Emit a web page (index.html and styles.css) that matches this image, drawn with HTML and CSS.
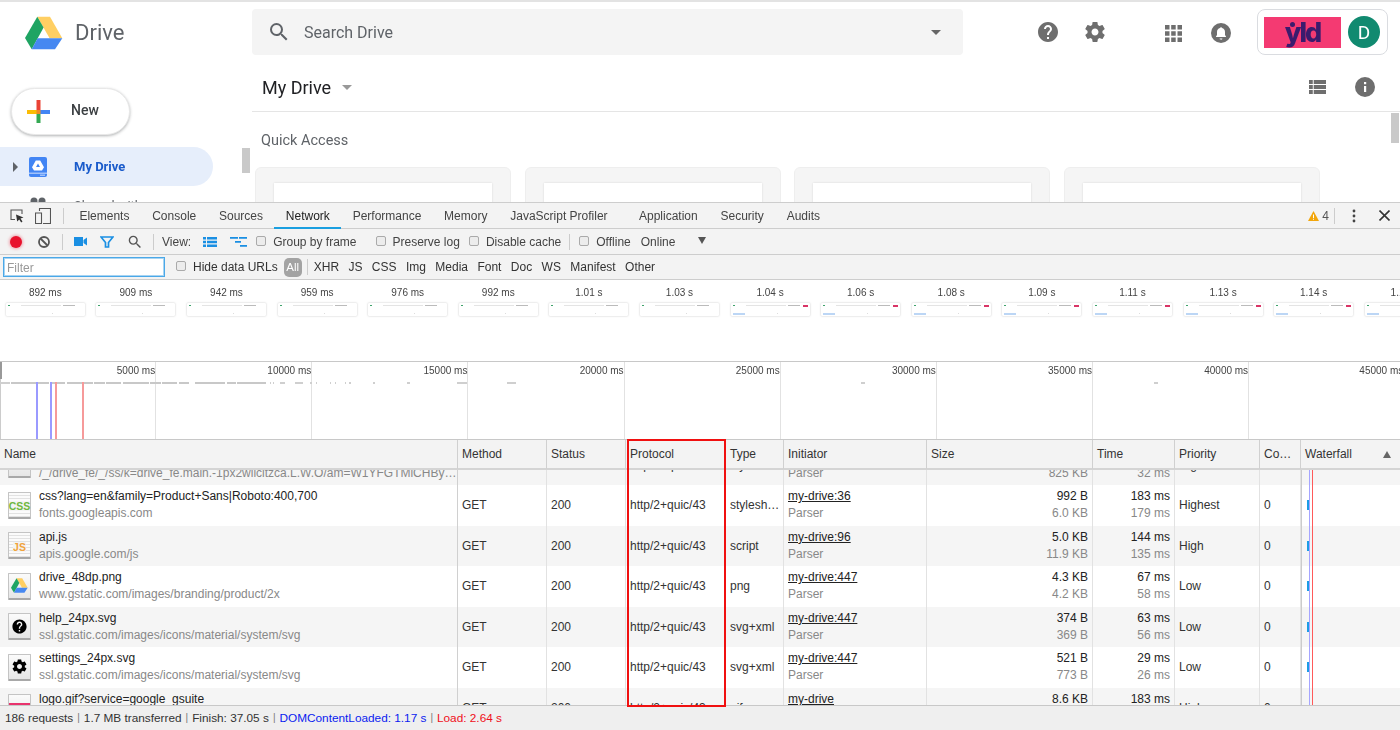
FILE: index.html
```html
<!DOCTYPE html>
<html lang="en">
<head>
<meta charset="utf-8">
<title>Drive network panel</title>
<link rel="stylesheet" href="styles.css">
</head>
<body>
<div class="page">
  <section class="drive">
    <header class="topbar">
      <div class="brand">
        <svg class="drive-logo" viewBox="0 0 38 34"><path fill="#ffcf63" d="M12.3.7H25l12.3 21.6H24.6z"/><path fill="#1fa463" d="M0 22 12.3.7l6.3 10.8L6.7 33.3z"/><path fill="#4688f1" d="M6.7 33.3H30l7.3-11H12.6z"/></svg>
        <span class="brand-name">Drive</span>
      </div>
      <div class="search">
        <svg class="search-icon" viewBox="0 0 24 24"><path fill="#5f6368" d="M15.5 14h-.79l-.28-.27A6.47 6.47 0 0 0 16 9.5 6.5 6.5 0 1 0 9.5 16c1.61 0 3.09-.59 4.23-1.57l.27.28v.79l5 4.99L20.49 19l-4.99-5zm-6 0C7.01 14 5 11.99 5 9.5S7.01 5 9.5 5 14 7.01 14 9.5 11.99 14 9.5 14z"/></svg>
        <span class="search-text">Search Drive</span>
        <span class="caret dark search-caret"></span>
      </div>
      <svg class="top-icon help" viewBox="0 0 24 24"><path d="M12 2C6.48 2 2 6.48 2 12s4.48 10 10 10 10-4.48 10-10S17.52 2 12 2zm1 17h-2v-2h2v2zm2.07-7.75l-.9.92C13.45 12.9 13 13.5 13 15h-2v-.5c0-1.1.45-2.1 1.17-2.83l1.24-1.26c.37-.36.59-.86.59-1.41 0-1.1-.9-2-2-2s-2 .9-2 2H8c0-2.21 1.79-4 4-4s4 1.79 4 4c0 .88-.36 1.68-.93 2.25z"/></svg>
      <svg class="top-icon gear" viewBox="0 0 24 24"><path d="M19.43 12.98c.04-.32.07-.64.07-.98s-.03-.66-.07-.98l2.11-1.65c.19-.15.24-.42.12-.64l-2-3.46c-.12-.22-.39-.3-.61-.22l-2.49 1c-.52-.4-1.08-.73-1.69-.98l-.38-2.65C14.46 2.18 14.25 2 14 2h-4c-.25 0-.46.18-.49.42l-.38 2.65c-.61.25-1.17.59-1.69.98l-2.49-1c-.23-.09-.49 0-.61.22l-2 3.46c-.13.22-.07.49.12.64l2.11 1.65c-.04.32-.07.65-.07.98s.03.66.07.98l-2.11 1.65c-.19.15-.24.42-.12.64l2 3.46c.12.22.39.3.61.22l2.49-1c.52.4 1.08.73 1.69.98l.38 2.65c.03.24.24.42.49.42h4c.25 0 .46-.18.49-.42l.38-2.65c.61-.25 1.17-.59 1.69-.98l2.49 1c.23.09.49 0 .61-.22l2-3.46c.12-.22.07-.49-.12-.64l-2.11-1.65zM12 15.5c-1.93 0-3.5-1.57-3.5-3.5s1.57-3.5 3.5-3.5 3.5 1.57 3.5 3.5-1.57 3.5-3.5 3.5z"/></svg>
      <svg class="top-icon apps" viewBox="0 0 17 17"><path d="M0 0h4.5v4.5H0zM6.2 0h4.5v4.5H6.200zM12.500 0H17v4.500h-4.500zM0 6.200h4.500v4.500H0zM6.200 6.200h4.500v4.500H6.200zM12.500 6.200H17v4.500h-4.500zM0 12.500h4.500V17H0zM6.200 12.500h4.500V17H6.200zM12.500 12.500H17V17h-4.500z"/></svg>
      <svg class="top-icon bell" viewBox="0 0 20 20"><circle cx="10" cy="10" r="10"/><path fill="#fff" d="M10 4.200c-.6 0-1 .4-1 .9-1.900.5-3 2-3 4v3l-1 1.400v.5h10v-.5l-1-1.400v-3c0-2-1.100-3.500-3-4 0-.5-.4-.9-1-.9zM8.600 15.500c0 .8.6 1.200 1.400 1.200s1.400-.4 1.400-1.200z"/></svg>
      <div class="account">
        <div class="org"><span class="org-name">yld</span></div>
        <div class="avatar">D</div>
      </div>
    </header>
    <div class="drive-body">
      <aside class="side">
        <button class="new-btn">
          <svg class="plus" viewBox="0 0 23 23"><path fill="#fbbc05" d="M0 10h10v4H0z"/><path fill="#4285f4" d="M13 10h10v4H13z"/><path fill="#ea4335" d="M9.500 0h4v10h-4z"/><path fill="#34a853" d="M9.500 14h4v9h-4z"/><path fill="#f08a24" d="M9.500 10h4v4h-4z"/></svg>
          <span class="new-label">New</span>
        </button>
        <div class="nav-item active">
          <span class="nav-arrow"></span>
          <svg class="nav-icon" viewBox="0 0 18 20"><rect width="18" height="20" rx="2" fill="#4285f4"/><path fill="#fff" d="M6.800 3.500h4.400l3.800 6.800-2 3.200H5l-2-3.200zM9 6.500 7 10h4z"/><path fill="#fff" d="M0 15.800h18v.8H0zM11 17.700h5v.8h-5z"/></svg>
          <span>My Drive</span>
        </div>
        <div class="nav-item">
          <span class="nav-arrow blank"></span>
          <svg class="nav-icon" viewBox="0 0 18 20"><circle cx="5" cy="5" r="3.500" fill="#5f6368"/><circle cx="13" cy="5" r="3.500" fill="#5f6368"/></svg>
          <span class="nav-muted">Shared with me</span>
        </div>
      </aside>
      <div class="thumb side-thumb"></div>
      <main class="main">
        <div class="crumb">
          <span class="crumb-title">My Drive</span>
          <span class="caret crumb-caret"></span>
          <svg class="list-icon" viewBox="0 0 18 14" preserveAspectRatio="none"><path fill="#6e6e6e" d="M0 0h4v4H0zM5 0h13v4H5zM0 5h4v4H0zM5 5h13v4H5zM0 10h4v4H0zM5 10h13v4H5z"/></svg>
          <svg class="info-icon" viewBox="0 0 20 20"><circle cx="10" cy="10" r="10" fill="#6e6e6e"/><path fill="#fff" d="M9 9h2.200v6H9zM9 5h2.200v2.200H9z"/></svg>
        </div>
        <h2 class="quick">Quick Access</h2>
        <div class="cards">
          <div class="card"><div class="card-inner"></div></div>
          <div class="card"><div class="card-inner"></div></div>
          <div class="card"><div class="card-inner"></div></div>
          <div class="card"><div class="card-inner"></div></div>
        </div>
      </main>
      <div class="thumb main-thumb"></div>
    </div>
  </section>

  <section class="devtools">
    <div class="tabs">
      <svg class="dt-icon inspect" viewBox="0 0 14 14"><path fill="none" stroke="#555" stroke-width="1.100" d="M5 10.500H1V1h11v4"/><path fill="#333" d="m6 5.500 7.500 3-3 1 2 3-1.300 1-2-3-2 2z"/></svg>
      <svg class="dt-icon device" viewBox="0 0 16 16"><path fill="none" stroke="#555" stroke-width="1.100" d="M6.500 15.500h-6V5h6v10.500zM4.500 3V.5h11v15H8"/></svg>
      <span class="vsep tab-sep"></span>
      <span class="tab">Elements</span>
      <span class="tab">Console</span>
      <span class="tab">Sources</span>
      <span class="tab on">Network</span>
      <span class="tab">Performance</span>
      <span class="tab">Memory</span>
      <span class="tab wide">JavaScript Profiler</span>
      <span class="tab">Application</span>
      <span class="tab">Security</span>
      <span class="tab">Audits</span>
      <span class="tab-end">
        <svg class="warn" viewBox="0 0 11 10"><path fill="#f2a60c" d="M5.500 0 11 10H0z"/><path fill="#fff" d="M5 3.500h1V7H5zM5 7.800h1v1H5z"/></svg>
        <span class="warn-count">4</span>
        <span class="vsep warn-sep"></span>
        <svg class="kebab" viewBox="0 0 4 14"><circle cx="2" cy="2" r="1.400"/><circle cx="2" cy="7" r="1.400"/><circle cx="2" cy="12" r="1.400"/></svg>
        <svg class="close" viewBox="0 0 11 11"><path stroke="#333" stroke-width="1.600" d="m.5.500 10 10M10.500.5l-10 10"/></svg>
      </span>
    </div>

    <div class="toolbar">
      <span class="record"></span>
      <svg class="tool clear g16" viewBox="0 0 12 12"><circle cx="6" cy="6" r="5" fill="none" stroke="#555" stroke-width="1.800"/><path stroke="#555" stroke-width="1.800" d="m2.500 2.500 7 7"/></svg>
      <span class="vsep g12"></span>
      <svg class="tool cam g11" viewBox="0 0 13 9"><path fill="#1a8fe3" d="M0 0h9v9H0zM9.500 3 13 .5v8L9.500 6z"/></svg>
      <svg class="tool funnel g13" viewBox="0 0 14 12"><path fill="none" stroke="#1a8fe3" stroke-width="1.700" d="M1 1h12L8.500 6.500V11h-3V6.500z"/></svg>
      <svg class="tool lens g14" viewBox="0 0 20 20"><path fill="#555" d="M13.500 12h-.79l-.28-.27A6.470 6.470 0 0 0 14 7.500 6.500 6.500 0 1 0 7.500 14c1.610 0 3.090-.59 4.230-1.570l.27.28v.79l5 4.990L18.490 17l-4.990-5zm-6 0C5.010 12 3 9.990 3 7.500S5.010 3 7.500 3 12 5.010 12 7.500 9.990 12 7.500 12z"/></svg>
      <span class="vsep g11"></span>
      <span class="g8">View:</span>
      <svg class="tool view-a g12" viewBox="0 0 14 10"><path fill="#1a8fe3" d="M0 0h3v2.500H0zM4 0h10v2.500H4zM0 3.700h3v2.500H0zM4 3.700h10v2.500H4zM0 7.500h3V10H0zM4 7.500h10V10H4z"/></svg>
      <svg class="tool view-b g13" viewBox="0 0 17 10"><path fill="#1a8fe3" d="M0 0h8v1.800H0zM17 0v1.800H9V0zM5 4h6v1.800H5zM10 8h7v1.800h-7z"/></svg>
      <label class="check g9"><span class="box"></span>Group by frame</label>
      <label class="check g19"><span class="box"></span>Preserve log</label>
      <label class="check g9"><span class="box"></span>Disable cache</label>
      <span class="vsep g8"></span>
      <label class="check g9"><span class="box"></span>Offline</label>
      <span class="g10">Online</span>
      <span class="tri g23"></span>
    </div>

    <div class="filters">
      <span class="filter-input">Filter</span>
      <label class="check g11"><span class="box"></span>Hide data URLs</label>
      <span class="pill">All</span>
      <span class="vsep g5"></span>
      <span class="type first">XHR</span>
      <span class="type">JS</span>
      <span class="type">CSS</span>
      <span class="type">Img</span>
      <span class="type">Media</span>
      <span class="type">Font</span>
      <span class="type">Doc</span>
      <span class="type">WS</span>
      <span class="type">Manifest</span>
      <span class="type">Other</span>
    </div>

    <div class="film">
      <div class="shot"><span>892 ms</span><i class="frame"></i></div>
      <div class="shot"><span>909 ms</span><i class="frame"></i></div>
      <div class="shot"><span>942 ms</span><i class="frame"></i></div>
      <div class="shot"><span>959 ms</span><i class="frame"></i></div>
      <div class="shot"><span>976 ms</span><i class="frame"></i></div>
      <div class="shot"><span>992 ms</span><i class="frame"></i></div>
      <div class="shot"><span>1.01 s</span><i class="frame"></i></div>
      <div class="shot"><span>1.03 s</span><i class="frame"></i></div>
      <div class="shot"><span>1.04 s</span><i class="frame late"></i></div>
      <div class="shot"><span>1.06 s</span><i class="frame late"></i></div>
      <div class="shot"><span>1.08 s</span><i class="frame late"></i></div>
      <div class="shot"><span>1.09 s</span><i class="frame late"></i></div>
      <div class="shot"><span>1.11 s</span><i class="frame late"></i></div>
      <div class="shot"><span>1.13 s</span><i class="frame late"></i></div>
      <div class="shot"><span>1.14 s</span><i class="frame late"></i></div>
      <div class="shot"><span>1.16 s</span><i class="frame late"></i></div>
    </div>

    <div class="overview">
      <div class="ov-cell">5000 ms</div>
      <div class="ov-cell">10000 ms</div>
      <div class="ov-cell">15000 ms</div>
      <div class="ov-cell">20000 ms</div>
      <div class="ov-cell">25000 ms</div>
      <div class="ov-cell">30000 ms</div>
      <div class="ov-cell">35000 ms</div>
      <div class="ov-cell">40000 ms</div>
      <div class="ov-cell">45000 ms</div>
      <svg class="ov-bars" viewBox="0 0 1400 3"><path stroke="#cfcfcf" stroke-width="2" d="M0 1h10"/><path stroke="#c8c8c8" stroke-width="2" stroke-dasharray="26 1 11 1 15 2" d="M11 1h178"/><path stroke="#c8c8c8" stroke-width="2" stroke-dasharray="30 2 9 1" d="M195 1h71"/><path stroke="#cfcfcf" stroke-width="2" d="M270 1h1M273 1h1M280 1h5M295 1h8M310 1h2M316 1h1M330 1h1M335 1h1M345 1h1M349 1h2M373 1h2M407 1h3M457 1h10M507 1h9M861 1h4M1154 1h4"/></svg>
      <i class="ov-line blue first"></i>
      <i class="ov-line blue second"></i>
      <i class="ov-line red first"></i>
      <i class="ov-line red second"></i>
    </div>

    <div class="tbl-head">
      <div class="th">Name</div>
      <div class="th">Method</div>
      <div class="th">Status</div>
      <div class="th">Protocol</div>
      <div class="th">Type</div>
      <div class="th">Initiator</div>
      <div class="th">Size</div>
      <div class="th">Time</div>
      <div class="th">Priority</div>
      <div class="th">Co…</div>
      <div class="th last">Waterfall<span class="sort"></span></div>
    </div>

    <div class="tbl-body">
      <div class="rows">
        <div class="row odd">
          <div class="td name"><span class="ficon"></span><div class="two"><b>main.css</b><em>/_/drive_fe/_/ss/k=drive_fe.main.-1px2wiicitzca.L.W.O/am=W1YFGTMiCHBy…</em></div></div>
          <div class="td">GET</div><div class="td">200</div><div class="td">http/2+quic/43</div><div class="td">stylesh…</div>
          <div class="td"><div class="two"><b><u>my-drive:24</u></b><em>Parser</em></div></div>
          <div class="td num"><div class="two"><b>93 KB</b><em>825 KB</em></div></div>
          <div class="td num"><div class="two"><b>36 ms</b><em>32 ms</em></div></div>
          <div class="td">Highest</div><div class="td">0</div><div class="td fall"><i class="bar"></i></div>
        </div>
        <div class="row">
          <div class="td name"><span class="ficon doc"><span class="ftext css">CSS</span></span><div class="two"><b>css?lang=en&amp;family=Product+Sans|Roboto:400,700</b><em>fonts.googleapis.com</em></div></div>
          <div class="td">GET</div><div class="td">200</div><div class="td">http/2+quic/43</div><div class="td">stylesh…</div>
          <div class="td"><div class="two"><b><u>my-drive:36</u></b><em>Parser</em></div></div>
          <div class="td num"><div class="two"><b>992 B</b><em>6.0 KB</em></div></div>
          <div class="td num"><div class="two"><b>183 ms</b><em>179 ms</em></div></div>
          <div class="td">Highest</div><div class="td">0</div><div class="td fall"><i class="bar"></i></div>
        </div>
        <div class="row odd">
          <div class="td name"><span class="ficon doc"><span class="ftext js">JS</span></span><div class="two"><b>api.js</b><em>apis.google.com/js</em></div></div>
          <div class="td">GET</div><div class="td">200</div><div class="td">http/2+quic/43</div><div class="td">script</div>
          <div class="td"><div class="two"><b><u>my-drive:96</u></b><em>Parser</em></div></div>
          <div class="td num"><div class="two"><b>5.0 KB</b><em>11.9 KB</em></div></div>
          <div class="td num"><div class="two"><b>144 ms</b><em>135 ms</em></div></div>
          <div class="td">High</div><div class="td">0</div><div class="td fall"><i class="bar"></i></div>
        </div>
        <div class="row">
          <div class="td name"><span class="ficon"><svg class="fsvg" viewBox="0 0 38 34"><path fill="#ffcf63" d="M12.300.7H25l12.300 21.600H24.600z"/><path fill="#1fa463" d="M0 22 12.300.7l6.300 10.800L6.700 33.300z"/><path fill="#4688f1" d="M6.700 33.300H30l7.300-11H12.600z"/></svg></span><div class="two"><b>drive_48dp.png</b><em>www.gstatic.com/images/branding/product/2x</em></div></div>
          <div class="td">GET</div><div class="td">200</div><div class="td">http/2+quic/43</div><div class="td">png</div>
          <div class="td"><div class="two"><b><u>my-drive:447</u></b><em>Parser</em></div></div>
          <div class="td num"><div class="two"><b>4.3 KB</b><em>4.2 KB</em></div></div>
          <div class="td num"><div class="two"><b>67 ms</b><em>58 ms</em></div></div>
          <div class="td">Low</div><div class="td">0</div><div class="td fall"><i class="bar"></i></div>
        </div>
        <div class="row odd">
          <div class="td name"><span class="ficon"><svg class="fsvg" viewBox="0 0 24 24"><path d="M12 2C6.480 2 2 6.480 2 12s4.480 10 10 10 10-4.480 10-10S17.520 2 12 2zm1 17h-2v-2h2v2zm2.070-7.750l-.9.920C13.450 12.900 13 13.500 13 15h-2v-.5c0-1.100.45-2.100 1.170-2.830l1.240-1.260c.37-.36.59-.86.59-1.410 0-1.100-.9-2-2-2s-2 .9-2 2H8c0-2.210 1.790-4 4-4s4 1.790 4 4c0 .88-.36 1.680-.93 2.250z"/></svg></span><div class="two"><b>help_24px.svg</b><em>ssl.gstatic.com/images/icons/material/system/svg</em></div></div>
          <div class="td">GET</div><div class="td">200</div><div class="td">http/2+quic/43</div><div class="td">svg+xml</div>
          <div class="td"><div class="two"><b><u>my-drive:447</u></b><em>Parser</em></div></div>
          <div class="td num"><div class="two"><b>374 B</b><em>369 B</em></div></div>
          <div class="td num"><div class="two"><b>63 ms</b><em>56 ms</em></div></div>
          <div class="td">Low</div><div class="td">0</div><div class="td fall"><i class="bar"></i></div>
        </div>
        <div class="row">
          <div class="td name"><span class="ficon"><svg class="fsvg" viewBox="0 0 24 24"><path d="M19.430 12.980c.04-.32.07-.64.07-.98s-.03-.66-.07-.98l2.110-1.650c.19-.15.24-.42.12-.64l-2-3.460c-.12-.22-.39-.3-.61-.22l-2.490 1c-.52-.4-1.080-.73-1.690-.98l-.38-2.650C14.460 2.180 14.250 2 14 2h-4c-.25 0-.46.18-.49.42l-.38 2.650c-.61.25-1.170.59-1.690.98l-2.490-1c-.23-.09-.49 0-.61.22l-2 3.460c-.13.22-.07.49.12.64l2.110 1.650c-.04.32-.07.65-.07.98s.03.66.07.98l-2.110 1.650c-.19.15-.24.42-.12.64l2 3.460c.12.22.39.3.61.22l2.490-1c.52.4 1.080.73 1.690.98l.38 2.650c.03.24.24.42.49.42h4c.25 0 .46-.18.49-.42l.38-2.650c.61-.25 1.170-.59 1.690-.98l2.490 1c.23.09.49 0 .61-.22l2-3.460c.12-.22.07-.49-.12-.64l-2.110-1.650zM12 15.500c-1.930 0-3.500-1.570-3.500-3.500s1.570-3.500 3.500-3.500 3.500 1.570 3.500 3.500-1.570 3.500-3.500 3.500z"/></svg></span><div class="two"><b>settings_24px.svg</b><em>ssl.gstatic.com/images/icons/material/system/svg</em></div></div>
          <div class="td">GET</div><div class="td">200</div><div class="td">http/2+quic/43</div><div class="td">svg+xml</div>
          <div class="td"><div class="two"><b><u>my-drive:447</u></b><em>Parser</em></div></div>
          <div class="td num"><div class="two"><b>521 B</b><em>773 B</em></div></div>
          <div class="td num"><div class="two"><b>29 ms</b><em>26 ms</em></div></div>
          <div class="td">Low</div><div class="td">0</div><div class="td fall"><i class="bar"></i></div>
        </div>
        <div class="row odd">
          <div class="td name"><span class="ficon"><span class="fstripe"></span></span><div class="two"><b>logo.gif?service=google_gsuite</b><em>www.google.com</em></div></div>
          <div class="td">GET</div><div class="td">200</div><div class="td">http/2+quic/43</div><div class="td">gif</div>
          <div class="td"><div class="two"><b><u>my-drive</u></b><em>Parser</em></div></div>
          <div class="td num"><div class="two"><b>8.6 KB</b><em>8.2 KB</em></div></div>
          <div class="td num"><div class="two"><b>183 ms</b><em>179 ms</em></div></div>
          <div class="td">High</div><div class="td">0</div><div class="td fall"><i class="dot"></i></div>
        </div>
      </div>
      <i class="wf-line blue"></i>
      <i class="wf-line red"></i>
    </div>

    <footer class="status">
      <span>186 requests</span><span class="pipe">|</span><span>1.7 MB transferred</span><span class="pipe">|</span><span>Finish: 37.05 s</span><span class="pipe">|</span><span class="dcl">DOMContentLoaded: 1.17 s</span><span class="pipe">|</span><span class="load">Load: 2.64 s</span>
    </footer>
    <div class="highlight"></div>
  </section>
</div>
</body>
</html>
```

FILE: styles.css
```css
* { box-sizing: border-box; }
html, body { margin: 0; height: 100%; background: #fff; }
body { overflow: hidden; }
.page {
  width: 1400px; height: 730px; overflow: hidden;
  display: flex; flex-direction: column;
  font-family: "Liberation Sans", Arial, sans-serif; font-size: 12px; color: #333;
  filter: blur(0.3px);
}

/* Drive */
.drive { height: 202px; flex: none; border-top: 2px solid #e3e3e3; overflow: hidden; font-family: Roboto, Arial, sans-serif; display: flex; flex-direction: column; }
.topbar { height: 63px; flex: none; padding-top: 7px; display: flex; align-items: flex-start; }
.brand { width: 252px; flex: none; padding: 7px 0 0 25px; display: flex; align-items: center; height: 41px; }
.drive-logo { width: 38px; height: 34px; }
.brand-name { margin: 0 0 2px 12px; font-size: 22px; color: #5f6368; }
.search { width: 711px; height: 46px; flex: none; background: #f4f4f4; border-radius: 4px; display: flex; align-items: center; padding-left: 15px; }
.search-icon { width: 24px; height: 24px; }
.search-text { margin-left: 13px; font-size: 16px; color: #5f6368; }
.caret { width: 0; height: 0; border: 5px solid transparent; border-top-color: #999; border-bottom: 0; }
.caret.dark { border-top-color: #666; }
.search-caret { margin-left: auto; margin-right: 22px; }
.top-icon { fill: #6e6e6e; flex: none; }
.help { width: 24px; height: 24px; margin: 11px 0 0 73px; }
.gear { width: 24px; height: 24px; margin: 11px 0 0 23px; }
.apps { width: 17px; height: 17px; margin: 16px 0 0 58px; }
.bell { width: 20px; height: 20px; margin: 14px 0 0 29px; }
.account { width: 131px; height: 46px; margin-left: 26px; flex: none; border: 1px solid #dadce0; border-radius: 8px; display: flex; align-items: center; padding-left: 6px; }
.org { width: 77px; height: 31px; background: #f43a72; display: flex; align-items: center; justify-content: center; position: relative; }
.org::before { content: ""; position: absolute; left: 26px; top: 5px; width: 5px; height: 5px; border-radius: 50%; background: #3b1b6d; }
.org-name { font-family: Inter, "Liberation Sans", sans-serif; font-size: 27px; line-height: 31px; font-weight: 800; letter-spacing: -2px; color: #3b1b6d; }
.avatar { width: 32px; height: 32px; margin-left: 7px; border-radius: 50%; background: #118a70; color: #fff; font-size: 19px; display: flex; align-items: center; justify-content: center; }

.drive-body { flex: 1; display: flex; position: relative; min-height: 0; }
.side { width: 252px; flex: none; padding-top: 23px; }
.new-btn { width: 119px; height: 47px; margin-left: 11px; border: 1px solid #e8e8e8; border-radius: 24px; background: #fff; box-shadow: 0 1px 3px rgba(60,64,67,.4); display: flex; align-items: center; padding: 0 0 0 15px; font: 500 14px Roboto, Arial, sans-serif; color: #3c4043; }
.plus { width: 23px; height: 23px; margin-right: 21px; }
.new-label { margin-bottom: 3px; }
.nav-item { width: 213px; height: 39px; display: flex; align-items: center; padding-left: 13px; border-radius: 0 20px 20px 0; font-size: 13px; }
.nav-item.active { margin-top: 12px; background: #e6eefb; color: #1a5bcb; font-weight: 700; }
.nav-arrow { width: 0; height: 0; border: 5px solid transparent; border-left: 5px solid #5f6368; border-right: 0; }
.nav-arrow.blank { border-left-color: transparent; }
.nav-icon { width: 18px; height: 20px; margin: 0 27px 0 11px; }
.nav-muted { color: #5f6368; }
.thumb { position: absolute; width: 8px; background: #c9c9c9; }
.side-thumb { left: 242px; top: 83px; height: 25px; }
.main-thumb { left: 1391px; top: 48px; height: 30px; }
.main { flex: 1; min-width: 0; }
.crumb { height: 47px; border-bottom: 1px solid #e5e5e5; display: flex; align-items: center; padding: 0 25px 2px 10px; }
.crumb-title { font-size: 18px; color: #202124; }
.crumb-caret { margin-left: 11px; }
.list-icon { width: 17px; height: 14px; margin-left: auto; }
.info-icon { width: 20px; height: 20px; margin-left: 29px; }
.quick { margin: 20px 0 0 9px; font-size: 14.500px; line-height: 17px; font-weight: 400; color: #5f6368; }
.cards { display: flex; gap: 13.700px; margin: 18px 0 0 3px; }
.card { width: 256px; height: 60px; flex: none; background: #f5f5f5; border-radius: 6px 6px 0 0; border: 1px solid #eee; padding: 15px 18px 0; }
.card-inner { height: 60px; background: #fff; box-shadow: 0 0 2px rgba(0,0,0,.12); }

/* DevTools */
.devtools { flex: 1; min-height: 0; display: flex; flex-direction: column; position: relative; background: #fff; }
.tabs, .toolbar, .filters { display: flex; align-items: center; flex: none; background: #f3f3f3; border-bottom: 1px solid #cdcdcd; }
.tabs { height: 27px; border-top: 1px solid #cdcdcd; padding-left: 10px; color: #444; }
.toolbar { height: 26px; padding-left: 10px; color: #444; }
.filters { height: 25px; padding-left: 3px; color: #333; }
.dt-icon { flex: none; }
.inspect { width: 14px; height: 14px; }
.device { width: 16px; height: 16px; margin-left: 11px; }
.vsep { width: 1px; height: 16px; background: #ccc; flex: none; }
.tab-sep { margin: 0 4px 0 12px; }
.tab { height: 100%; padding: 0 11.400px; display: flex; align-items: center; position: relative; }
.tab.wide { padding-right: 20px; }
.tab.on { color: #222; border-bottom: 2px solid #1a9fe0; margin-bottom: -1px; padding-top: 1px; }
.tab-end { margin-left: auto; display: flex; align-items: center; padding-right: 10px; }
.warn { width: 11px; height: 10px; }
.warn-count { margin-left: 3px; color: #555; }
.warn-sep { margin-left: 5px; }
.kebab { width: 4px; height: 14px; margin-left: 17px; fill: #444; }
.close { width: 11px; height: 11px; margin-left: 23px; }

.record { width: 12px; height: 12px; flex: none; border-radius: 50%; background: #e8122d; box-shadow: 0 0 3px 1px rgba(232,18,45,.35); }
.tool { flex: none; }
.clear { width: 12px; height: 12px; }
.cam { width: 13px; height: 9px; }
.funnel { width: 14px; height: 12px; }
.lens { width: 14px; height: 14px; }
.view-a { width: 14px; height: 10px; }
.view-b { width: 17px; height: 10px; }
.g5 { margin-left: 5px; } .g8 { margin-left: 8px; } .g9 { margin-left: 9px; }
.g10 { margin-left: 10px; } .g11 { margin-left: 11px; } .g12 { margin-left: 12px; }
.g13 { margin-left: 13px; } .g14 { margin-left: 14px; } .g16 { margin-left: 16px; }
.g19 { margin-left: 19px; } .g23 { margin-left: 23px; }
.check { display: flex; align-items: center; flex: none; }
.box { width: 10px; height: 10px; margin: -2px 7px 0 0; border: 1px solid #aaa; border-radius: 2px; background: #ececec; }
.tri { width: 0; height: 0; border: 4px solid transparent; border-top: 7px solid #555; border-bottom: 0; margin-top: -2px; }
.filter-input { width: 162px; height: 20px; border: 1px solid #4aa8e8; box-shadow: inset 0 0 0 1px #a8d4f2; background: #fff; color: #999; padding: 3px 0 0 3px; line-height: 14px; }
.pill { margin-left: 6px; width: 18px; height: 19px; border-radius: 5px; background: #a3a3a3; color: #fff; display: flex; align-items: center; justify-content: center; font-size: 11.500px; }
.type { margin-left: 9.400px; }
.type.first { margin-left: 6px; }

.film { height: 81px; flex: none; display: flex; overflow: hidden; }
.shot { width: 90.600px; flex: none; display: flex; flex-direction: column; align-items: center; padding-top: 7px; font-size: 10px; line-height: 12px; color: #444; }
.frame {
  width: 79px; height: 13px; margin-top: 4px; display: block; border-radius: 1px; box-shadow: 0 0 2px rgba(0,0,0,.25);
  background-color: #fff;
  background-image: linear-gradient(#3fa36c,#3fa36c), linear-gradient(#e4e4e4,#e4e4e4), linear-gradient(#bbb,#bbb), linear-gradient(#ddd,#ddd);
  background-repeat: no-repeat;
  background-size: 2px 1px, 40px 1px, 12px 1px, 1px 1px;
  background-position: 2px 2px, 15px 2px, 57px 2px, 46px 10px;
}
.frame.late {
  background-image: linear-gradient(#3fa36c,#3fa36c), linear-gradient(#e4e4e4,#e4e4e4), linear-gradient(#bbb,#bbb), linear-gradient(#d93566,#d93566), linear-gradient(#bcd6f5,#bcd6f5), linear-gradient(#ddd,#ddd);
  background-size: 2px 1px, 40px 1px, 12px 1px, 5px 2px, 12px 2px, 1px 1px;
  background-position: 2px 2px, 15px 2px, 57px 2px, 72px 2px, 2px 10px, 46px 10px;
}

.overview { height: 79px; flex: none; display: flex; position: relative; overflow: hidden; border-top: 1px solid #c8c8c8; border-bottom: 1px solid #c8c8c8; background: linear-gradient(#999,#999) 0 0 / 2px 17px no-repeat, linear-gradient(#ccc,#ccc) 0 0 / 1px 100% no-repeat; }
.ov-cell { width: 156.150px; flex: none; border-right: 1px solid #e2e2e2; text-align: right; padding: 3px 0 0 0; font-size: 10px; line-height: 12px; color: #444; white-space: nowrap; }
.ov-cell:last-of-type { border-right: 0; padding-right: 2px; }
.ov-bars { position: absolute; left: 0; top: 20px; width: 1400px; height: 3px; }
.ov-line { position: absolute; top: 20px; bottom: 0; width: 2px; }
.ov-line.blue { background: #9a9aff; }
.ov-line.red { background: #f69a9a; }
.ov-line.blue.first { left: 36px; }
.ov-line.blue.second { left: 50px; }
.ov-line.red.first { left: 55px; }
.ov-line.red.second { left: 82px; }

.tbl-head, .row { display: grid; grid-template-columns: 458px 89px 79px 100px 58px 143px 166px 82px 85px 41px 1fr; }
.tbl-head { height: 30px; flex: none; background: #f3f3f3; border-bottom: 2px solid #d4d4d4; position: relative; z-index: 1; }
.th { padding-left: 4px; line-height: 29px; border-right: 1px solid #d0d0d0; white-space: nowrap; position: relative; color: #333; }
.th.last { border-right: 0; }
.sort { position: absolute; right: 9px; top: 11px; width: 0; height: 0; border: 4px solid transparent; border-bottom: 7px solid #666; border-top: 0; }

.tbl-body { flex: 1; min-height: 0; overflow: hidden; position: relative; border-bottom: 1px solid #c8c8c8; }
.rows { margin-top: -25.500px; }
.row { height: 40.500px; background: #fff; }
.row.odd { background: #f5f5f5; }
.td { padding: 0 4px; border-right: 1px solid #e2e2e2; display: flex; align-items: center; min-width: 0; white-space: nowrap; overflow: hidden; color: #333; }
.td.num { justify-content: flex-end; text-align: right; padding-right: 4px; }
.td.name { padding-left: 8px; border-right-color: #d0d0d0; }
.td.fall { border-right: 0; padding-left: 5px; border-left: 1px solid #ccc; }
.two { display: flex; flex-direction: column; min-width: 0; }
.two b, .two em { font-weight: 400; font-style: normal; line-height: 17px; }
.two b { color: #222; }
.two em { color: #888; }
.two u { text-underline-offset: 1px; }
.ficon { width: 23px; height: 27px; flex: none; margin-right: 8px; border: 1px solid #c4c4c4; border-bottom: 2px solid #a8a8a8; border-radius: 1px; background: linear-gradient(#fbfbfb, #e6e6e6); display: flex; align-items: center; justify-content: center; position: relative; }
.ficon.doc { background: repeating-linear-gradient(#fbfbfb 0 2px, #e2e2e2 2px 3px); }
.ftext { font-size: 10.500px; font-weight: 700; line-height: 10px; margin-top: 3px; background: #f4f4f4; }
.ftext.css { color: #6fb83f; }
.ftext.js { color: #f0a33c; }
.fsvg { width: 17px; height: 17px; }
.fstripe { width: 100%; height: 4px; background: #e8336d; align-self: flex-start; margin-top: 8px; }
.bar { width: 2.500px; height: 10px; background: #1c9ce6; display: block; }
.dot { width: 2px; height: 2px; background: #1aa37a; display: block; margin-top: 28px; }
.wf-line { position: absolute; top: 0; bottom: 0; width: 1px; }
.wf-line.blue { left: 1309px; background: #a5a5ff; }
.wf-line.red { left: 1312px; background: #ff5a5a; }

.status { height: 24px; flex: none; background: #efefef; display: flex; align-items: center; padding: 0 0 1px 5px; color: #333; white-space: pre; font-size: 11.800px; }
.pipe { margin: 0 4px; color: #777; font-size: 10px; }
.dcl { color: #0a1cf0; }
.load { color: #f01020; }

.highlight { position: absolute; left: 627px; top: 237px; width: 99px; height: 268px; border: 2px solid #f01010; z-index: 2; }
```
